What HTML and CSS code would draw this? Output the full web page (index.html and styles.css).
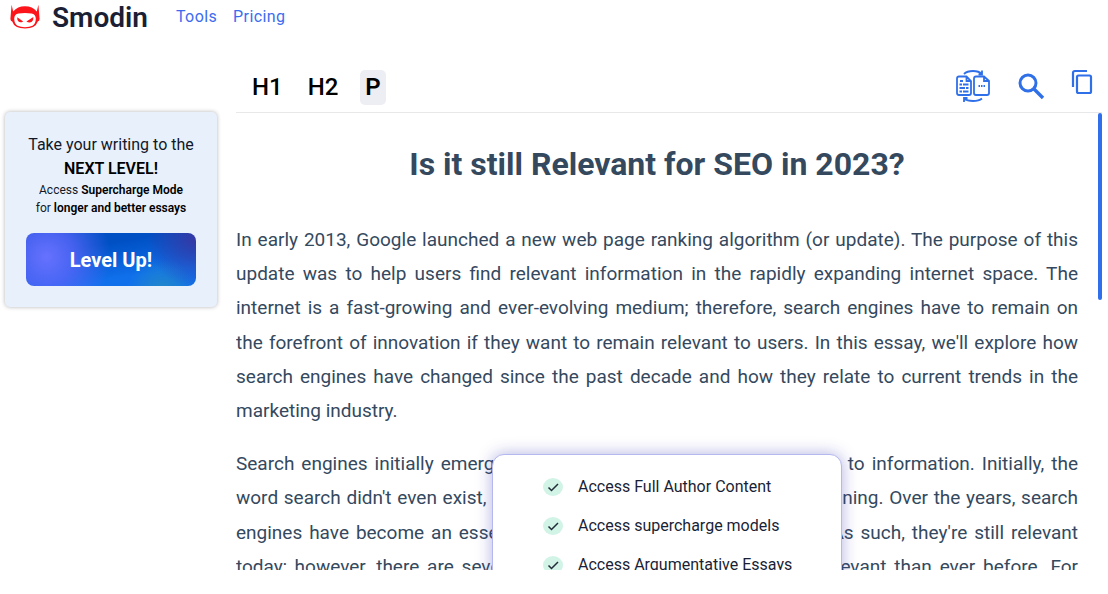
FILE: index.html
```html
<!DOCTYPE html>
<html lang="en">
  <head>
    <meta charset="UTF-8" />
    <meta name="viewport" content="width=device-width, initial-scale=1.0" />
    <link rel="stylesheet" href="styles.css">
    <title>Smodin</title>
  </head>
  <body>
    <header class="header">
      <a class="brand" href="#">
        <svg class="logo" viewBox="0 0 30 26" aria-hidden="true">
          <path d="M0.4 15 L1.6 0.8 L3.2 7.6 Q7.500 2.2 15 2.2 Q22.500 2.2 26.8 7.6 L28.4 0.8 L29.6 15 Q29.4 17 27.8 17.6 Q25.500 24.6 15 24.6 Q4.500 24.6 2.2 17.6 Q0.6 17 0.4 15Z" fill="#fb151b"/>
          <path d="M4.2 14.500 Q4.500 9.8 8.500 9.4 Q15 8.4 21.500 9.4 Q25.500 9.8 25.8 14.500 Q25.8 19.8 22.500 21.8 Q19.500 23.2 15 23.2 Q10.500 23.2 7.500 21.8 Q4.2 19.8 4.2 14.500Z" fill="#fff"/>
          <path d="M7.2 13.2 L13.2 17.4 Q10.500 19.2 8.500 17.6 Q7 16 7.2 13.2Z M23.4 13 L16.4 17.6 Q19.500 19.4 21.800 17.8 Q23.600 16.200 23.4 13Z" fill="#fb151b"/>
        </svg>
        <span class="brand-name">Smodin</span>
      </a>
      <nav class="nav">
        <a href="#">Tools</a>
        <a href="#">Pricing</a>
      </nav>
    </header>

    <div class="layout">
      <aside class="promo">
        <p class="promo-title">Take your writing to the<br><b>NEXT LEVEL!</b></p>
        <p class="promo-text">Access <b>Supercharge Mode</b><br>for <b>longer and better essays</b></p>
        <button class="level-up" type="button">Level Up!</button>
      </aside>

      <main class="editor">
        <div class="toolbar">
          <div class="formats">
            <button class="format" type="button">H1</button>
            <button class="format" type="button">H2</button>
            <button class="format active" type="button">P</button>
          </div>
          <div class="actions">
            <button class="action" type="button" aria-label="Rewrite">
              <svg width="36" height="34" viewBox="0 0 36 34" fill="none" stroke="#2f70e9" stroke-width="1.8">
                <path d="M4 7.500 H11.500 L16 12 V24 Q16 26 14 26 H4 Q2 26 2 24 V9.500 Q2 7.500 4 7.500Z M11.500 7.500 V12 H16"/>
                <path d="M21 7.500 H29 L34 12 V24 Q34 26 32 26 H21 Q19 26 19 24 V9.500 Q19 7.500 21 7.500Z M29 7.500 V12 H34"/>
                <path d="M5 12 H8 M4.500 15.500 H7 M8 15.500 H13.500 M4.500 19 H10 M11 19 H13.500 M4.500 22.500 H7 M8 22.500 H13.500"/>
                <path d="M23.500 17 H30" stroke-dasharray="1.500 1"/>
                <path d="M9 5 Q12 2 18 2 Q24 2 26.500 5 M27 1.500 V5.500 H23.500"/>
                <path d="M27 29.500 Q24 32 18 32 Q12 32 9.500 29.500 M9 33 V29 H12.500"/>
              </svg>
            </button>
            <button class="action" type="button" aria-label="Search">
              <svg width="28" height="28" viewBox="0 0 28 28" fill="none" stroke="#2f70e9">
                <circle cx="11" cy="11" r="8" stroke-width="3"/>
                <path d="M17 17 L26 26" stroke-width="3.400"/>
              </svg>
            </button>
            <button class="action copy" type="button" aria-label="Copy">
              <svg width="22" height="26" viewBox="0 0 22 26" fill="none" stroke="#2f70e9" stroke-width="2.200">
                <path d="M2 18 V4 Q2 2 4 2 H16"/>
                <rect x="6" y="6.500" width="14" height="17.500" rx="1.500"/>
              </svg>
            </button>
          </div>
        </div>

        <div class="content">
          <article class="essay">
            <h1>Is it still Relevant for SEO in 2023?</h1>
            <p>In early 2013, Google launched a new web page ranking algorithm (or update). The purpose of this update was to help users find relevant information in the rapidly expanding internet space. The internet is a fast-growing and ever-evolving medium; therefore, search engines have to remain on the forefront of innovation if they want to remain relevant to users. In this essay, we'll explore how search engines have changed since the past decade and how they relate to current trends in the marketing industry.</p>
            <p>Search engines initially emerged as a way to help people gain access to information. Initially, the word search didn't even exist, and people simply used the term data mining. Over the years, search engines have become an essential part of our everyday online lives. As such, they're still relevant today; however, there are several reasons why they are now more relevant than ever before. For example, people use them to find answers quickly.</p>
            <section class="upgrade">
              <ul>
                <li><svg viewBox="0 0 20 18"><ellipse cx="10" cy="9" rx="10" ry="9"/><path d="M5.500 9.500 L8.500 12.500 L15 6"/></svg>Access Full Author Content</li>
                <li><svg viewBox="0 0 20 18"><ellipse cx="10" cy="9" rx="10" ry="9"/><path d="M5.500 9.500 L8.500 12.500 L15 6"/></svg>Access supercharge models</li>
                <li><svg viewBox="0 0 20 18"><ellipse cx="10" cy="9" rx="10" ry="9"/><path d="M5.500 9.500 L8.500 12.500 L15 6"/></svg>Access Argumentative Essays</li>
              </ul>
            </section>
          </article>
          <div class="thumb"></div>
        </div>
      </main>
    </div>
  </body>
</html>
```
FILE: styles.css
```css
* {
    box-sizing: border-box;
}
body {
    margin: 0;
    height: 100vh;
    padding-bottom: 24px;
    display: flex;
    flex-direction: column;
    overflow: hidden;
    background: #fff;
    font-family: Roboto, "Liberation Sans", sans-serif;
    color: #111827;
}
button {
    border: 0;
    padding: 0;
    background: none;
    font-family: inherit;
    cursor: pointer;
}

/* header */
.header {
    display: flex;
    align-items: center;
    gap: 28px;
    height: 34px;
    padding-left: 10px;
    flex-shrink: 0;
}
.brand {
    display: flex;
    align-items: center;
    gap: 12px;
    color: #1a1f36;
    text-decoration: none;
}
.logo {
    width: 30px;
    height: 26px;
}
.brand-name {
    font-size: 28px;
    font-weight: 600;
}
.nav {
    display: flex;
    gap: 16px;
    padding-bottom: 2px;
    font-size: 16px;
}
.nav a {
    color: #3b6cf0;
    text-decoration: none;
    letter-spacing: 0.025em;
}

.layout {
    flex: 1;
    min-height: 0;
    display: flex;
    gap: 19px;
    padding: 0 6px 0 5px;
}

/* left card */
.promo {
    width: 212px;
    flex-shrink: 0;
    align-self: flex-start;
    margin-top: 78px;
    padding: 21px;
    border-radius: 5px;
    background: #e8f0fc;
    box-shadow: 0 0 4px rgba(0, 0, 0, 0.3);
    text-align: center;
}
.promo p {
    margin: 0;
    white-space: nowrap;
}
.promo b {
    font-weight: 600;
    color: #000;
}
.promo-title {
    font-size: 16px;
    line-height: 24px;
}
.promo-text {
    font-size: 12px;
    line-height: 18px;
}
.level-up {
    width: 100%;
    height: 53px;
    margin-top: 16px;
    border-radius: 8px;
    background:
        radial-gradient(circle at 12% 45%, #6672ff 0, rgba(88, 102, 250, 0.8) 18%, transparent 42%),
        radial-gradient(circle at 100% 10%, #3538a4 0, transparent 28%),
        radial-gradient(circle at 80% 115%, #238bc4 0, transparent 24%),
        linear-gradient(170deg, #0050c4 30%, #1070ec 75%);
    color: #fff;
    font-size: 20px;
    font-weight: 700;
}

/* editor */
.editor {
    flex: 1;
    min-width: 0;
    display: flex;
    flex-direction: column;
    padding-top: 26px;
}
.toolbar {
    display: flex;
    justify-content: space-between;
    align-items: center;
    height: 53px;
    flex-shrink: 0;
    border-bottom: 1px solid #e8e8ea;
    padding: 0 9px 0 10px;
}
.formats {
    display: flex;
    gap: 13px;
    padding-top: 2px;
}
.format {
    height: 35px;
    padding: 0 6px;
    border-radius: 5px;
    font-size: 24px;
    font-weight: 500;
    color: #000;
}
.format.active {
    padding: 0 5px;
    margin-left: 3px;
    background: #ededf4;
    font-weight: 600;
}
.actions {
    display: flex;
    align-items: center;
    gap: 26px;
}
.action svg {
    display: block;
}
.copy {
    padding-bottom: 8px;
}
.content {
    flex: 1;
    min-height: 0;
    display: flex;
    overflow: hidden;
}
.essay {
    position: relative;
    flex: 1;
    padding: 31px 20px 0 0;
    color: #34495e;
}
.essay h1 {
    margin: 0 0 39px;
    font-size: 32px;
    line-height: 40px;
    font-weight: 700;
    text-align: center;
}
.essay p {
    margin: 0 0 19px;
    font-size: 19px;
    line-height: 1.8;
    text-align: justify;
}
.thumb {
    width: 4px;
    height: 187px;
    border-radius: 2px;
    background: #2f6fec;
}

/* upgrade popup over the text */
.upgrade {
    position: absolute;
    top: 341px;
    left: 50%;
    width: 350px;
    height: 320px;
    margin-left: -175px;
    padding: 12px 20px 0 50px;
    border: 1px solid #b4b8ee;
    border-radius: 12px;
    background: #fff;
    box-shadow: 0 0 16px rgba(60, 60, 180, 0.4);
}
.upgrade ul {
    margin: 0;
    padding: 0;
    list-style: none;
}
.upgrade li {
    display: flex;
    align-items: center;
    gap: 15px;
    height: 39px;
    font-size: 16px;
    color: #1a1f36;
}
.upgrade svg {
    width: 20px;
    height: 18px;
}
.upgrade ellipse {
    fill: #d2f4e7;
}
.upgrade path {
    fill: none;
    stroke: #222b38;
    stroke-width: 1.5;
}
```
